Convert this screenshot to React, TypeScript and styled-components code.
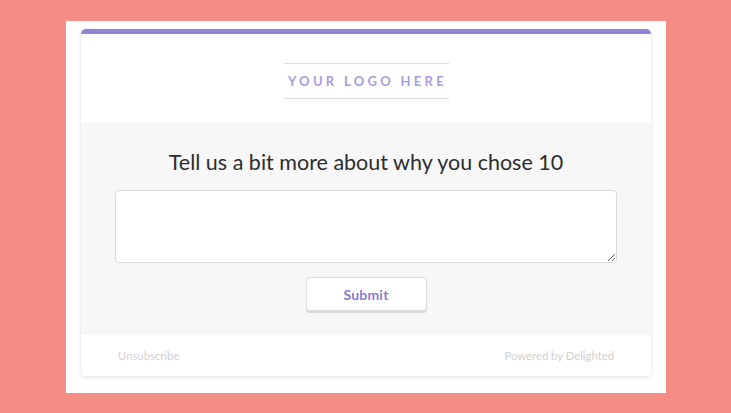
import React from "react";
import styled, { createGlobalStyle } from "styled-components";

const GlobalStyle = createGlobalStyle`
  html, body {
    margin: 0;
    padding: 0;
    background: #f48d83;
  }
  body {
    font-family: Lato, "Open Sans", sans-serif;
  }
`;

const Page = styled.div`
  width: 731px;
  height: 413px;
  padding: 21px 0 0 66px;
  box-sizing: border-box;
`;

const Frame = styled.div`
  width: 600px;
  height: 372px;
  background: #ffffff;
  padding: 8px 15px 0 15px;
  box-sizing: border-box;
`;

const Card = styled.div`
  width: 570px;
  background: #ffffff;
  border-top: 5px solid #9384d6;
  border-radius: 5px 5px 4px 4px;
  box-shadow: 0 1px 4px rgba(0, 0, 0, 0.12), 0 0 1px rgba(0, 0, 0, 0.08);
  overflow: hidden;
`;

const Header = styled.div`
  height: 89px;
  display: flex;
  align-items: center;
  justify-content: center;
`;

const Logo = styled.div`
  width: 165px;
  height: 36px;
  box-sizing: border-box;
  border-top: 1.5px solid #dcdce4;
  border-bottom: 1.5px solid #dcdce4;
  display: flex;
  align-items: center;
  justify-content: center;
  margin-top: 5px;
  font-family: Lato, sans-serif;
  font-weight: 700;
  font-size: 13px;
  letter-spacing: 3.3px;
  white-space: nowrap;
  color: #a99cdc;
  padding-left: 3px;
`;

const Body = styled.div`
  height: 212px;
  background: #f7f7f7;
  box-sizing: border-box;
  padding: 24px 34px 0 34px;
  display: flex;
  flex-direction: column;
  align-items: center;
`;

const Question = styled.h1`
  margin: 0;
  font-family: Lato, sans-serif;
  font-weight: 400;
  font-size: 21.5px;
  line-height: 30px;
  color: #2d2d2d;
`;

const Answer = styled.textarea`
  margin-top: 13px;
  width: 502px;
  height: 73px;
  box-sizing: border-box;
  background: #ffffff;
  border: 1px solid #dadada;
  border-radius: 4px;
  resize: vertical;
  outline: none;
`;

const SubmitButton = styled.button`
  margin-top: 14px;
  width: 121px;
  height: 34px;
  background: #ffffff;
  border: 1px solid #dddddd;
  border-radius: 4px;
  box-shadow: 0 2px 1px rgba(0, 0, 0, 0.12);
  font-family: Lato, sans-serif;
  font-weight: 700;
  font-size: 14px;
  letter-spacing: 0.2px;
  color: #8b7bd3;
  cursor: pointer;
`;

const Footer = styled.div`
  height: 41px;
  display: flex;
  align-items: center;
  justify-content: space-between;
  padding: 0 37px 0 37px;
  font-family: Lato, sans-serif;
  font-size: 11.3px;
  color: #d2d2d2;
`;

const App: React.FC = () => {
  return (
    <>
      <GlobalStyle />
      <Page>
        <Frame>
          <Card>
            <Header>
              <Logo>YOUR LOGO HERE</Logo>
            </Header>
            <Body>
              <Question>Tell us a bit more about why you chose 10</Question>
              <Answer />
              <SubmitButton>Submit</SubmitButton>
            </Body>
            <Footer>
              <span>Unsubscribe</span>
              <span>Powered by Delighted</span>
            </Footer>
          </Card>
        </Frame>
      </Page>
    </>
  );
};

export default App;
